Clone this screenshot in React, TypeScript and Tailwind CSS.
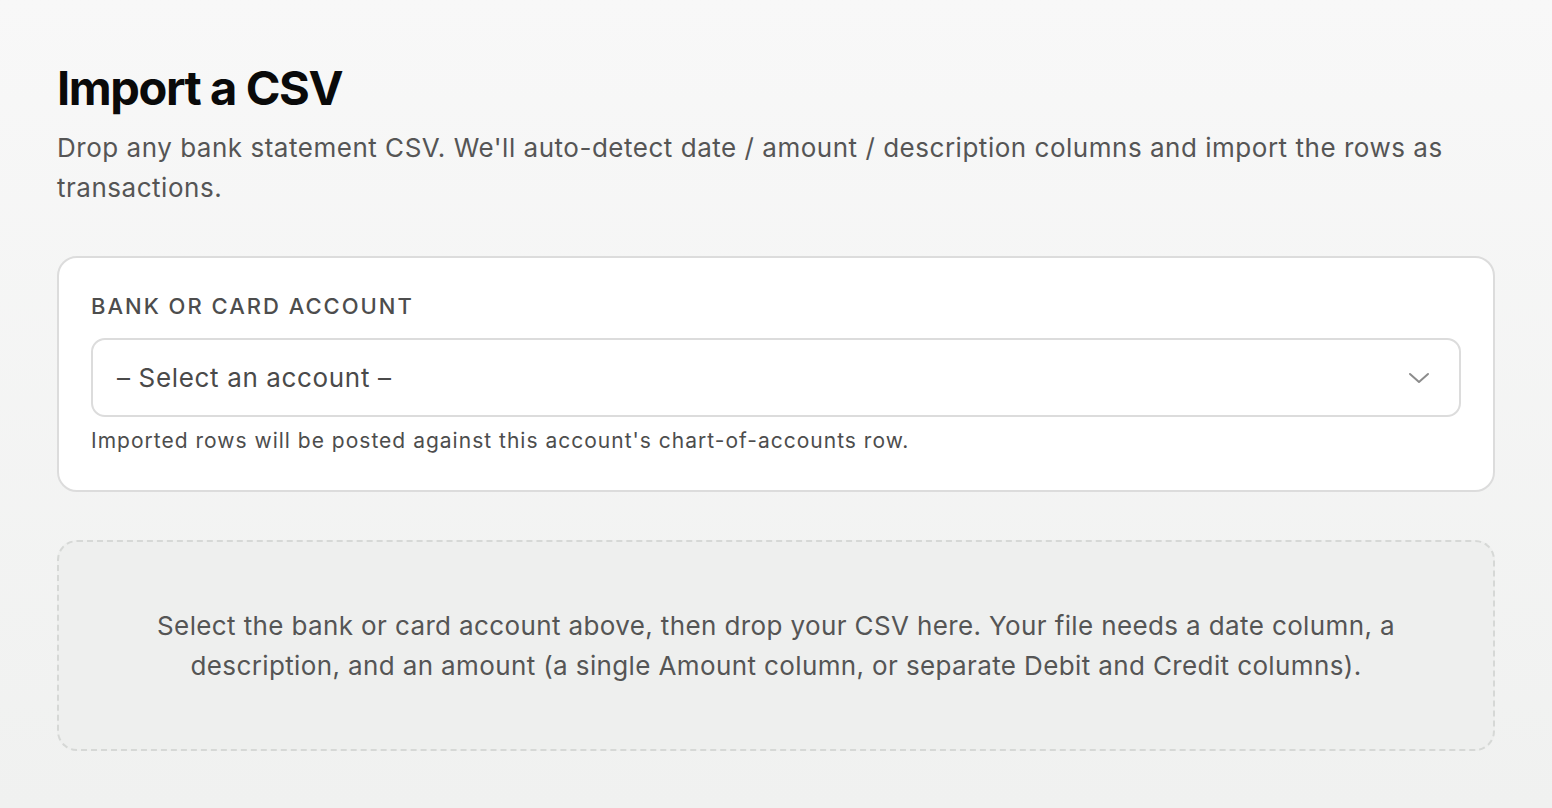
export default function App() {
  return (
    <div className="min-h-screen w-full bg-gradient-to-b from-[#f8f8f8] to-[#f0f1f0] px-[57px] pt-[58px] pb-10 font-['Inter',sans-serif] text-[#1a1a1a]">
      <h1 className="text-[47px] font-bold leading-[60px] tracking-[-0.03em] text-[#0a0a0a]">
        Import a CSV
      </h1>
      <p className="mt-[10px] text-[26px] leading-[40px] tracking-[0.02em] text-[#555555]">
        Drop any bank statement CSV. We'll auto-detect date / amount / description columns and import the rows as transactions.
      </p>

      <div className="mt-[48px] rounded-[20px] border-2 border-[#dcdcdc] bg-white px-[32px] pt-[31px] pb-[33px]">
        <label className="block text-[22px] font-medium uppercase leading-[34px] tracking-[0.09em] text-[#4d4d4d]">
          Bank or card account
        </label>
        <div className="mt-[15px] flex h-[79px] items-center justify-between rounded-[14px] border-2 border-[#dcdcdc] bg-white pl-[24px] pr-[28px]">
          <span className="text-[26px] tracking-[0.025em] text-[#4a4a4a]">– Select an account –</span>
          {/* chevron */}
          <svg width="24" height="24" viewBox="0 0 24 24" fill="none" stroke="#8c8c8c" strokeWidth="2" strokeLinecap="round" strokeLinejoin="round">
            <polyline points="3 8 12 16 21 8" />
          </svg>
        </div>
        <p className="mt-[8px] text-[21px] leading-[32px] tracking-[0.048em] text-[#4d4d4d]">
          Imported rows will be posted against this account's chart-of-accounts row.
        </p>
      </div>

      <div className="mt-[48px] flex h-[211px] items-center justify-center rounded-[20px] border-2 border-dashed border-[#d6d8d6] bg-[#eeefee] px-[90px]">
        <p className="text-center text-[26px] leading-[40px] tracking-[0.0145em] text-[#555555]">
          Select the bank or card account above, then drop your CSV here. Your file needs a date column, a description, and an amount (a single Amount column, or separate Debit and Credit columns).
        </p>
      </div>
    </div>
  );
}
